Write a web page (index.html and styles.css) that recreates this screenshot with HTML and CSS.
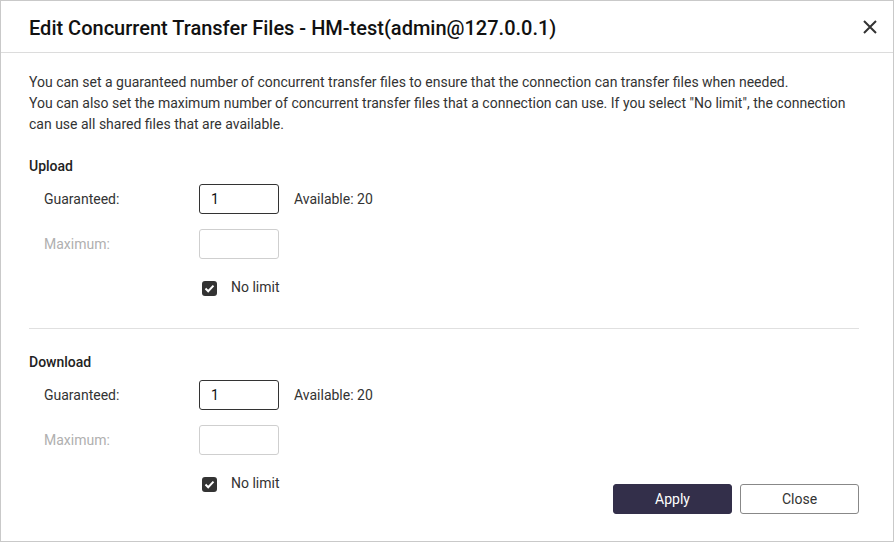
FILE: index.html
```html
<!DOCTYPE html>
<html>
<head>
<meta charset="utf-8">
<link rel="stylesheet" href="styles.css">
</head>
<body>
<div class="dialog">
  <div class="header">
    <div class="title">Edit Concurrent Transfer Files - HM-test(admin@127.0.0.1)</div>
    <button class="x-btn" aria-label="Close">
      <svg width="14" height="14" viewBox="0 0 14 14"><path d="M1 1 L13 13 M13 1 L1 13" stroke="#333" stroke-width="2" fill="none"/></svg>
    </button>
  </div>
  <div class="body">
    <p class="desc">You can set a guaranteed number of concurrent transfer files to ensure that the connection can transfer files when needed.<br>You can also set the maximum number of concurrent transfer files that a connection can use. If you select "No limit", the connection<br>can use all shared files that are available.</p>

    <div class="section">
      <div class="sec-title">Upload</div>
      <div class="row">
        <span class="label">Guaranteed:</span>
        <span class="input">1</span>
        <span class="avail">Available: 20</span>
      </div>
      <div class="row">
        <span class="label disabled">Maximum:</span>
        <span class="input disabled"></span>
      </div>
      <div class="check-row">
        <span class="checkbox"><svg width="11" height="9" viewBox="0 0 11 9"><path d="M1.5 4.5 L4.2 7.2 L9.5 1.6" stroke="#fff" stroke-width="2" fill="none"/></svg></span>
        <span class="check-label">No limit</span>
      </div>
    </div>

    <div class="divider"></div>

    <div class="section last">
      <div class="form">
        <div class="sec-title">Download</div>
        <div class="row">
          <span class="label">Guaranteed:</span>
          <span class="input">1</span>
          <span class="avail">Available: 20</span>
        </div>
        <div class="row">
          <span class="label disabled">Maximum:</span>
          <span class="input disabled"></span>
        </div>
        <div class="check-row">
          <span class="checkbox"><svg width="11" height="9" viewBox="0 0 11 9"><path d="M1.5 4.5 L4.2 7.2 L9.5 1.6" stroke="#fff" stroke-width="2" fill="none"/></svg></span>
          <span class="check-label">No limit</span>
        </div>
      </div>
      <div class="buttons">
        <button class="btn primary">Apply</button>
        <button class="btn">Close</button>
      </div>
    </div>
  </div>
</div>
</body>
</html>
```
FILE: styles.css
```css
* { box-sizing: border-box; }
html, body { margin: 0; padding: 0; background: #fff; }
body { font-family: Roboto, "Liberation Sans", sans-serif; color: #333; }

.dialog {
  width: 894px;
  height: 542px;
  border: 1px solid #c9c9c9;
  display: flex;
  flex-direction: column;
}

.header {
  height: 52px;
  flex: none;
  border-bottom: 1px solid #dcdcdc;
  display: flex;
  align-items: center;
  justify-content: space-between;
  padding: 0 16px 0 28px;
}
.title {
  font-size: 20px;
  font-weight: 500;
  line-height: 24px;
  color: #111;
  padding-top: 2px;
}
.x-btn {
  border: 0;
  background: none;
  padding: 0;
  width: 14px;
  height: 14px;
  display: flex;
  margin-top: 1px;
}

.body {
  flex: 1;
  display: flex;
  flex-direction: column;
  padding: 19px 34px 27px 28px;
}

.desc {
  margin: 0;
  font-size: 14px;
  line-height: 21px;
  color: #333;
  white-space: nowrap;
}

.section { margin-top: 21px; }
.section.last {
  margin-top: 23px;
  flex: 1;
  display: flex;
  justify-content: space-between;
  align-items: flex-end;
}
.form { align-self: flex-start; }

.sec-title {
  font-size: 14px;
  font-weight: 500;
  line-height: 21px;
  color: #222;
}

.row {
  display: flex;
  align-items: center;
  height: 30px;
  margin-top: 7px;
  font-size: 14px;
  line-height: 20px;
}
.row + .row { margin-top: 15px; }

.label {
  width: 170px;
  padding-left: 15px;
  flex: none;
  color: #333;
}
.label.disabled { color: #b0b0b0; }

.input {
  width: 80px;
  height: 30px;
  border: 1px solid #333;
  border-radius: 3px;
  display: flex;
  align-items: center;
  padding-left: 11px;
  font-size: 14px;
  color: #111;
}
.input.disabled { border-color: #cfcfcf; }

.avail { margin-left: 15px; color: #333; }

.check-row {
  display: flex;
  align-items: center;
  height: 20px;
  margin-top: 18px;
  padding-left: 173px;
  font-size: 14px;
  line-height: 20px;
}
.checkbox {
  width: 15px;
  height: 15px;
  border-radius: 3px;
  background: #333;
  display: flex;
  align-items: center;
  justify-content: center;
  margin-top: 2px;
}
.check-label { margin-left: 14px; color: #333; }

.divider {
  height: 1px;
  background: #e0e0e0;
  margin-top: 31px;
}

.buttons { display: flex; gap: 8px; }
.btn {
  width: 119px;
  height: 30px;
  border: 1px solid #888;
  border-radius: 3px;
  background: #fff;
  font-family: Roboto, "Liberation Sans", sans-serif;
  font-size: 14px;
  color: #333;
  padding: 0;
}
.btn.primary {
  background: #332f4a;
  border-color: #332f4a;
  color: #fff;
}
```
